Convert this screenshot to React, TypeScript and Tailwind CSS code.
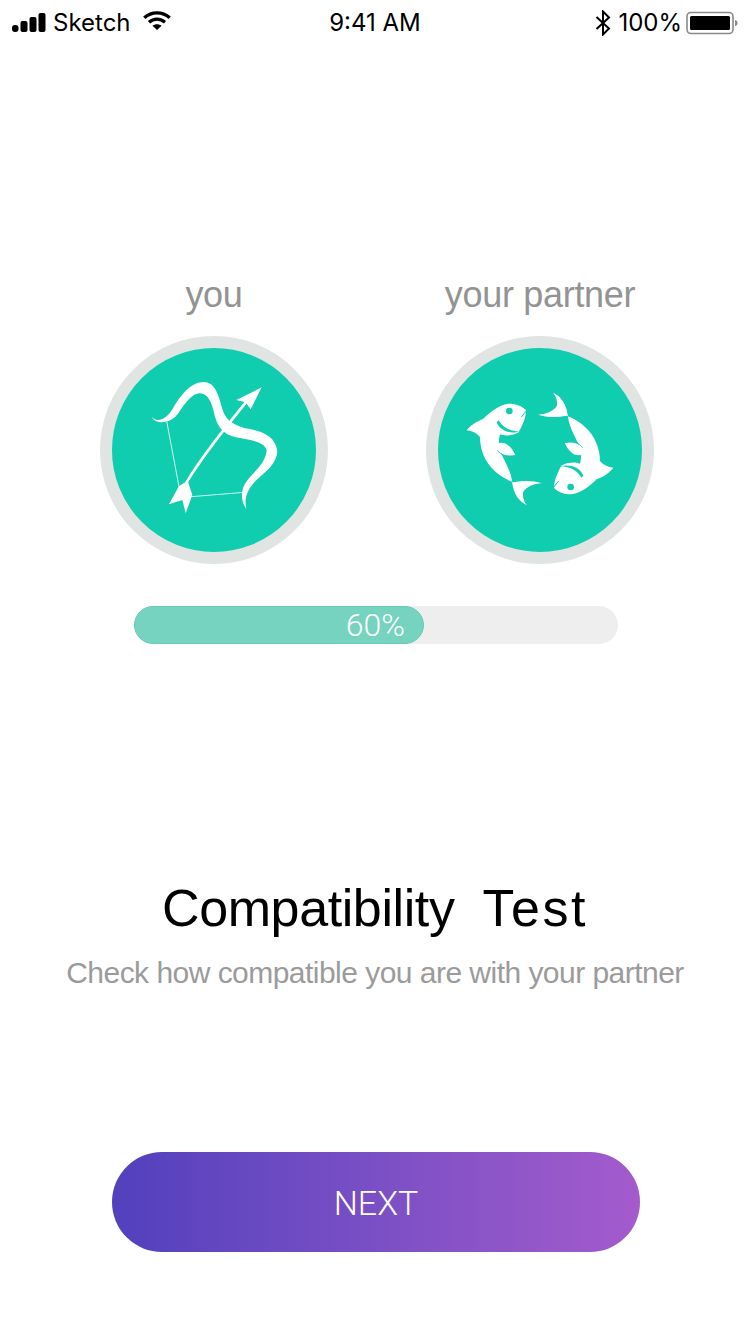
const Signal = () => (
  <svg width="34" height="20" viewBox="0 0 34 20" className="fill-black">
    <rect x="0" y="12" width="6.5" height="7" rx="3" />
    <rect x="8.5" y="8" width="7" height="11" rx="2" />
    <rect x="17.5" y="4" width="7" height="15" rx="2" />
    <rect x="26.5" y="0" width="7" height="19" rx="2" />
  </svg>
);

const Wifi = () => (
  <svg width="28" height="20" viewBox="0 0 30 22">
    <path d="M1 7.5C9 .2 21 .2 29 7.5" fill="none" stroke="black" strokeWidth="3.6" />
    <path d="M6.2 12.4C11.5 7.8 18.5 7.8 23.8 12.4" fill="none" stroke="black" strokeWidth="3.6" />
    <path d="M10 16.2C13 14 17 14 20 16.2L15 21Z" fill="black" />
  </svg>
);

const Bluetooth = () => (
  <svg width="16" height="26" viewBox="0 0 16 26">
    <path d="M1.5 7L14 18.5L8 24.5V1.5L14 7.5L1.5 19" fill="none" stroke="black" strokeWidth="2" />
  </svg>
);

const Battery = () => (
  <svg width="52" height="24" viewBox="0 0 52 24">
    <rect x="1" y="1.5" width="46" height="21" rx="4" fill="none" stroke="#8a8a8a" strokeWidth="1.6" />
    <rect x="4" y="5" width="40" height="14" rx="1.5" fill="black" />
    <path d="M49 9C51 9.5 51.5 10.5 51.5 12S51 14.5 49 15Z" fill="#8a8a8a" />
  </svg>
);

const StatusBar = () => (
  <div className="flex h-[46px] items-center justify-between pl-[12px] pr-[12px] font-['Inter',sans-serif] text-[24px] text-black">
    <div className="flex w-[240px] items-center">
      <Signal />
      <span className="ml-[7px] text-[24px]">Sketch</span>
      <span className="ml-[12px] mb-[4px] flex"><Wifi /></span>
    </div>
    <span>9:41 AM</span>
    <div className="flex w-[240px] items-center justify-end">
      <Bluetooth />
      <span className="ml-[7px] mr-[4px]">100%</span>
      <Battery />
    </div>
  </div>
);

const Bow = () => (
  <svg width="170" height="170" viewBox="0 15 510 510">
    <path d="M112 178L150 380M188 410L345 397" stroke="white" strokeOpacity="0.8" strokeWidth="3" fill="none" />
    <path d="M172 368C225 280 300 190 370 103" stroke="white" strokeWidth="8" fill="none" />
    <path d="M398 82L322 120L350 127L365 148Z" fill="white" />
    <path d="M120 433L150 378L176 362L190 405L170 460L160 420Z" fill="white" />
    <path
      d="M68 170C85 190 112 178 130 148C155 105 185 66 225 66C255 66 268 100 278 140C288 178 305 190 345 204C395 212 440 225 445 275C440 320 400 340 375 368C355 390 345 415 352 447C340 430 335 410 342 385C355 345 410 320 413 270C405 245 365 240 320 232C285 222 268 205 258 170C250 135 240 100 212 100C190 100 170 128 148 160C125 192 80 195 68 170Z"
      fill="white"
    />
  </svg>
);

const Fish = () => (
  <g>
    <path
      d="M228 105C215 92 195 85 175 86C145 90 120 112 100 131C78 140 60 152 50 166C66 168 80 174 90 186C90 240 120 295 190 322C220 316 250 316 275 325C250 326 230 336 220 350C216 365 222 380 231 391C208 382 190 355 187 325C185 295 168 265 154 236C146 220 144 200 150 178C165 184 190 182 206 172C218 150 228 128 228 105Z"
      fill="white"
    />
    <path d="M145 205C165 198 182 212 196 240C175 246 155 242 142 225Z" fill="white" />
    <path d="M142 226C152 240 170 246 194 242" fill="none" stroke="#0fcdae" strokeWidth="2.5" />
    <path d="M140 142C148 165 178 178 208 170C180 168 160 160 146 136Z" fill="#0fcdae" />
    <path d="M214 126L230 106" fill="none" stroke="#0fcdae" strokeWidth="3" />
    <circle cx="178" cy="108" r="10" fill="#0fcdae" />
  </g>
);

const Pisces = () => (
  <svg width="180" height="140" viewBox="0 15 540 420">
    <Fish />
    <g transform="rotate(180 270 222)">
      <Fish />
    </g>
  </svg>
);

const Avatar = ({ label, children }: { label: string; children: React.ReactNode }) => (
  <div className="flex w-[228px] flex-col items-center">
    <span className="text-[36px] leading-[42px] tracking-[-0.3px] text-[#939393]">{label}</span>
    <div className="mt-[20px] flex h-[228px] w-[228px] items-center justify-center rounded-full border-[12px] border-[#e0e4e3] bg-[#0fcdae]">
      {children}
    </div>
  </div>
);

export default function App() {
  return (
    <div className="flex h-[1334px] w-[750px] flex-col bg-white font-['Liberation_Sans',sans-serif]">
      <StatusBar />
      <div className="mt-[228px] flex gap-[98px] pl-[100px]">
        <Avatar label="you"><Bow /></Avatar>
        <Avatar label="your partner"><Pisces /></Avatar>
      </div>
      <div className="ml-[134px] mt-[42px] h-[38px] w-[484px] rounded-full bg-[#eeeeee]">
        <div className="flex h-full w-[290px] items-center justify-end rounded-full border border-[#67cdb6] bg-[#76d3bf] pr-[18px] font-['Roboto',sans-serif] text-[32px] font-light text-white">
          60%
        </div>
      </div>
      <h1 className="mt-[232px] whitespace-pre text-center text-[52px] leading-[64px] tracking-[-0.4px] text-black">
        Compatibility  <span className="tracking-[2.5px]">Test</span>
      </h1>
      <p className="mt-[15px] text-center text-[30px] leading-[36px] tracking-[-0.53px] text-[#9b9b9b]">Check how compatible you are with your partner</p>
      <button className="ml-[112px] mt-[161px] flex h-[100px] w-[528px] items-center justify-center rounded-full bg-gradient-to-r from-[#5240bd] to-[#a45bcc] pt-[2px] font-['Roboto',sans-serif] text-[34px] font-light text-white">
        NEXT
      </button>
    </div>
  );
}
